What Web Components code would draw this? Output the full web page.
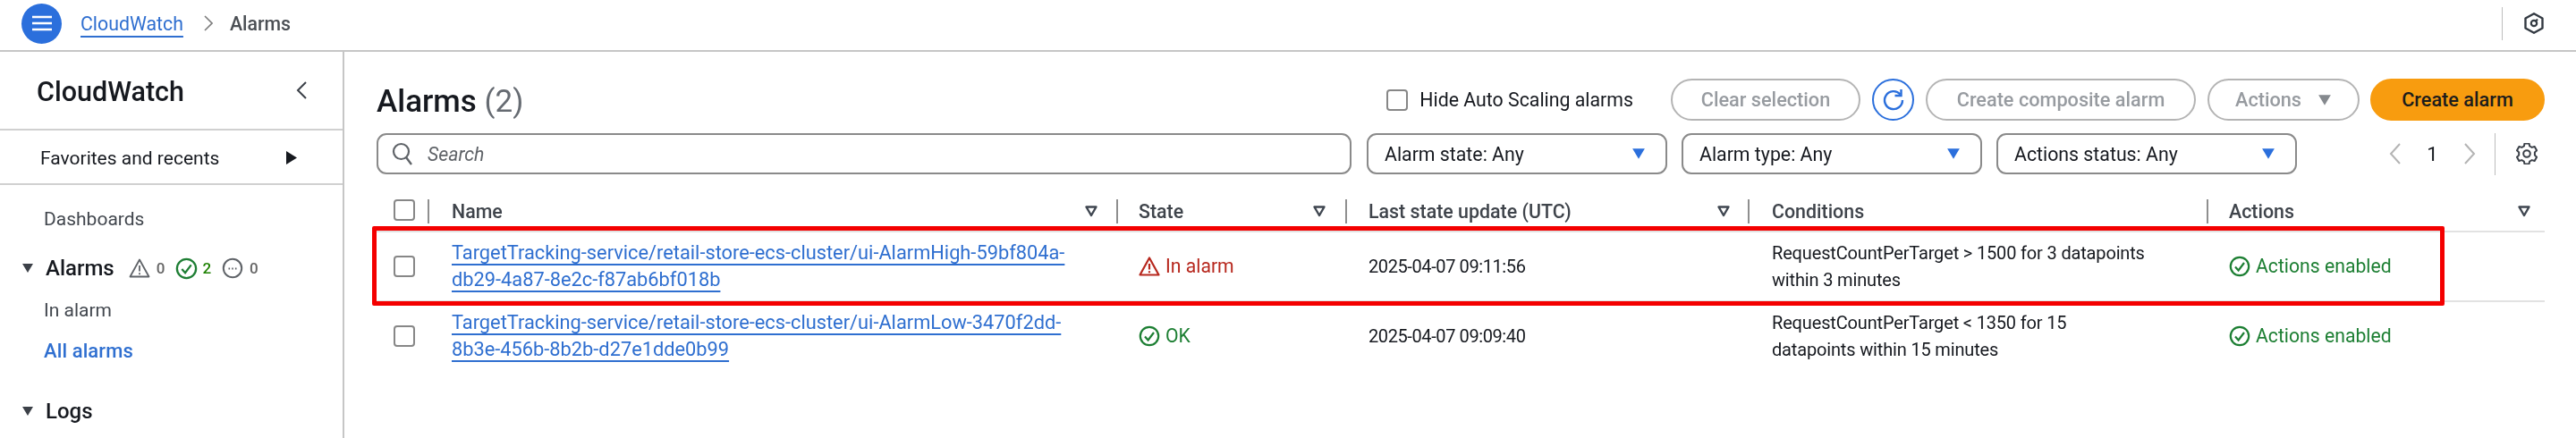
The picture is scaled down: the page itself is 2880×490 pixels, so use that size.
<!DOCTYPE html>
<html lang="en"><head><meta charset="utf-8"><title>CloudWatch Alarms</title>
<style>
html,body{margin:0;padding:0;background:#fff}
body{font-family:Roboto,"Liberation Sans",sans-serif;color:#16191f;width:2880px;height:490px;overflow:hidden}
</style></head><body>
<app-shell>
  <top-bar slot="top"></top-bar>
  <side-nav slot="side"></side-nav>
  <alarms-panel slot="main"></alarms-panel>
</app-shell>
<script>
function def(name, css, html){
  customElements.define(name, class extends HTMLElement{
    constructor(){super();const s=this.attachShadow({mode:'open'});
      s.innerHTML='<style>'+css+'</style>'+(typeof html==='function'?html(this):html);}
    connectedCallback(){ if(typeof html==='function'){this.shadowRoot.innerHTML='<style>'+css+'</style>'+html(this);} }
  });
}
const I={
 tri:(c,w=14,h=14)=>`<svg width="${w}" height="${h}" viewBox="0 0 14 14"><path d="M1 2h12L7 12z" fill="${c}"/></svg>`,
 filt:`<svg width="14" height="13" viewBox="0 0 14 13"><path d="M1.5 1.5h11L7 11z" fill="none" stroke="#3f4650" stroke-width="2.4" stroke-linejoin="round"/></svg>`,
 warn:(c,s=23,sw=2)=>`<svg width="${s}" height="${s}" viewBox="0 0 24 24"><path d="M12 2.5 22.5 21.5h-21z" fill="none" stroke="${c}" stroke-width="${sw}" stroke-linejoin="round"/><path d="M12 9v6.5M12 17.2v2" stroke="${c}" stroke-width="${sw}" fill="none"/></svg>`,
 ok:(c,s=24)=>`<svg width="${s}" height="${s}" viewBox="0 0 24 24"><circle cx="12" cy="12" r="10.2" fill="none" stroke="${c}" stroke-width="2.2"/><path d="M7 12.5l3.6 4L17 8" fill="none" stroke="${c}" stroke-width="2.2"/></svg>`,
 dots:(c,s=24)=>`<svg width="${s}" height="${s}" viewBox="0 0 24 24"><circle cx="12" cy="12" r="10.2" fill="none" stroke="${c}" stroke-width="2"/><path d="M7.5 12.5h1.6M11.2 12.5h1.6M14.9 12.5h1.6" stroke="${c}" stroke-width="2.2"/></svg>`
};
def('app-shell',`:host{display:grid;grid-template-columns:385px 1fr;grid-template-rows:58px 432px;width:2880px;height:490px;position:relative;overflow:hidden;filter:blur(.4px)}
 ::slotted([slot=top]){grid-column:1/3}`,
 `<slot name="top"></slot><slot name="side"></slot><slot name="main"></slot>`);

def('top-bar',`:host{display:flex;align-items:center;height:58px;box-sizing:border-box;border-bottom:2px solid #c6c6c6;padding:0 36px 4px 24px;font-size:21.3px}
 .menu{width:45px;height:45px;border-radius:50%;background:#2b6fdc;display:flex;align-items:center;justify-content:center;margin-right:21px}
 a{color:#2f6fd0;text-decoration:underline;text-underline-offset:6px;text-decoration-thickness:1.5px}
 .cur{color:#4b4f54;font-weight:500}
 .sep{margin:0 19px 0 23px;display:flex}
 .right{margin-left:auto;display:flex;align-items:center;height:37px;border-left:1px solid #bdbdbd;padding-left:24px}`,
 `<div class="menu"><svg width="22" height="18" viewBox="0 0 22 18"><path d="M0 2h22M0 9h22M0 16h22" stroke="#fff" stroke-width="2.6"/></svg></div>
 <a href="#">CloudWatch</a>
 <span class="sep"><svg width="10" height="18" viewBox="0 0 10 18"><path d="M1 1l8 8-8 8" fill="none" stroke="#7d7d7d" stroke-width="1.6"/></svg></span>
 <span class="cur">Alarms</span>
 <div class="right"><svg width="22" height="24" viewBox="0 0 22 24"><path d="M11 1.2 20.5 6.5v11L11 22.8 1.5 17.5v-11z" fill="none" stroke="#333a42" stroke-width="2.4" stroke-linejoin="round"/><circle cx="11" cy="12" r="3.2" fill="none" stroke="#333a42" stroke-width="2.2"/><path d="M12.5 10.5l2.5-3" stroke="#333a42" stroke-width="2"/></svg></div>`);

def('side-nav',`:host{display:block;border-right:2px solid #c6c6c6;box-sizing:border-box;height:432px;font-size:21px;overflow:hidden}
 .h{height:88px;box-sizing:border-box;border-bottom:2px solid #d0d0d0;display:flex;align-items:center;justify-content:space-between;padding:0 40px 0 41px}
 .h b{font-size:30.5px;font-weight:500;color:#16191f;position:relative;top:1px}
 .f{height:61px;box-sizing:border-box;border-bottom:2px solid #d0d0d0;display:flex;align-items:center;justify-content:space-between;padding:2px 51px 0 45px;color:#16191f}
 ul{list-style:none;margin:0;padding:0}
 .i{display:flex;align-items:center;height:30px;padding-left:49px;color:#42474e}
 .t{display:flex;align-items:center;height:30px;padding-left:24px;font-weight:500;font-size:24px;color:#16191f}
 .t>svg{margin-right:13px}
 .c{display:flex;align-items:center;font-size:17px;color:#666;font-weight:500;margin-left:16px;gap:7px}
 .c+.c{margin-left:12px}
 .g{color:#1d8102;gap:5px}`,
 `<div class="h"><b>CloudWatch</b><svg width="12" height="20" viewBox="0 0 12 20"><path d="M11 1 2 10l9 9" fill="none" stroke="#3b4048" stroke-width="2"/></svg></div>
 <div class="f"><span>Favorites and recents</span><svg width="12" height="15" viewBox="0 0 12 15"><path d="M0 0l12 7.5L0 15z" fill="#16191f"/></svg></div>
 <ul>
  <li class="i" style="margin-top:23px">Dashboards</li>
  <li class="t" style="margin-top:25px">${I.tri('#3c4148')}<span>Alarms</span>
    <span class="c">${I.warn('#5f6368',24,1.8)}0</span><span class="c g">${I.ok('#1e7e34',25)}2</span><span class="c">${I.dots('#5f6368',24)}0</span></li>
  <li class="i" style="margin-top:17px">In alarm</li>
  <li class="i" style="margin-top:15px;color:#2f6fd0;font-weight:500;letter-spacing:.1px;font-size:22px">All alarms</li>
  <li class="t" style="margin-top:38px">${I.tri('#3c4148')}<span>Logs</span></li>
 </ul>`);

def('aws-button',`:host{display:inline-flex;align-items:center;justify-content:center;height:47px;box-sizing:border-box;border:2.5px solid #b4b4b4;border-radius:24px;font-size:21.7px;font-weight:500;color:#979ba0;gap:18px}
 :host([primary]){background:#f89c0f;border-color:#f89c0f;color:#1c1c1c}`,`<slot></slot>`);

def('aws-check',`:host{display:inline-block;width:24px;height:24px;box-sizing:border-box;border:2.5px solid #878787;border-radius:4px;background:#fff;flex:none}`,``);

def('aws-select',`:host{display:flex;align-items:center;justify-content:space-between;width:336px;height:46px;box-sizing:border-box;border:2.5px solid #8a8a8a;border-radius:11px;padding:0 22px 0 18px;font-size:21.3px;color:#16191f}`,
 ()=>`<span><slot></slot></span>${I.tri('#2b6fdc',16,16)}`);

def('alarms-panel',`:host{display:block;padding:30px 35px 0 36px;box-sizing:border-box;height:432px;font-size:21.3px}
 .r1,.r2{display:flex;align-items:center}
 .r1{height:47px}
 .r2{height:46px;margin-top:14px}
 h1{margin:0;font-size:35px;font-weight:500;color:#16191f;position:relative;top:2px}
 h1 span{font-weight:400;color:#666b72}
 .hide{display:flex;align-items:center;gap:13px;margin-left:auto;color:#16191f}
 .btns{display:flex;align-items:center;gap:13px;margin-left:42px}
 .ref{width:47px;height:47px;border-radius:50%;border:2.5px solid #2b6fdc;box-sizing:border-box;display:flex;align-items:center;justify-content:center}
 .search{flex:1;display:flex;align-items:center;height:46px;box-sizing:border-box;border:2.5px solid #8a8a8a;border-radius:11px;padding-left:15px;margin-right:17px;font-style:italic;color:#5f6368;gap:16px}
 .sel{display:flex;gap:16px}
 .pg{display:flex;align-items:center;flex:none;width:277px;box-sizing:border-box;padding-left:103px;height:47px;font-size:22px;color:#16191f}
 .pg i{width:1px;height:47px;background:#bdbdbd;margin:0 23px 0 21px}
 .pg .n{width:71px;text-align:center;font-style:normal}`,
 `<div class="r1"><h1>Alarms <span>(2)</span></h1>
   <label class="hide"><aws-check></aws-check><span>Hide Auto Scaling alarms</span></label>
   <div class="btns"><aws-button style="width:212px">Clear selection</aws-button>
    <div class="ref"><svg width="26" height="26" viewBox="0 0 26 26"><path d="M20.5 6.5A10 10 0 1 0 23 13" fill="none" stroke="#2b6fdc" stroke-width="2.4"/><path d="M14.5 8h7V1" fill="none" stroke="#2b6fdc" stroke-width="2.4"/></svg></div>
    <aws-button style="width:302px">Create composite alarm</aws-button>
    <aws-button style="width:170px">Actions ${I.tri('#85898e',16,16)}</aws-button>
    <aws-button primary style="width:195px;margin-left:-1px">Create alarm</aws-button></div></div>
  <div class="r2"><div class="search"><svg width="24" height="26" viewBox="0 0 24 26"><circle cx="10.5" cy="10.5" r="8.5" fill="none" stroke="#5f6368" stroke-width="2.2"/><path d="M16 17l6 8" stroke="#5f6368" stroke-width="2.4"/></svg><span>Search</span></div>
   <div class="sel"><aws-select>Alarm state: Any</aws-select><aws-select>Alarm type: Any</aws-select><aws-select>Actions status: Any</aws-select></div>
   <div class="pg"><svg width="13" height="24" viewBox="0 0 13 24"><path d="M12 1 2 12l10 11" fill="none" stroke="#b4b4b4" stroke-width="2"/></svg><span class="n">1</span><svg width="13" height="24" viewBox="0 0 13 24"><path d="M1 1l10 11L1 23" fill="none" stroke="#b4b4b4" stroke-width="2"/></svg><i></i>
    <svg width="24" height="24" viewBox="0 0 24 24"><path d="M9.5 1.5h5l.7 3 2.5 1.4 3-.9 2.4 4.2-2.2 2.2v3.2l2.2 2.2-2.4 4.2-3-.9-2.5 1.4-.7 3h-5l-.7-3-2.5-1.4-3 .9L1 16.8l2.2-2.2v-3.2L1 9.2 3.4 5l3 .9 2.5-1.4z" transform="translate(0 -1)" fill="none" stroke="#3b4048" stroke-width="2" stroke-linejoin="round"/><circle cx="12" cy="12" r="3.8" fill="none" stroke="#3b4048" stroke-width="2"/></svg></div></div>
  <alarm-table></alarm-table>`);

const COLS='grid-template-columns:57px 770px 256px 450px 513px 378px;';
def('alarm-table',`:host{display:block;margin-top:28px;position:relative}
 .head{display:grid;${COLS}height:35px;font-weight:500;font-size:21.4px;color:#3f444b}
 .c{display:flex;align-items:center;height:27px;justify-content:space-between;box-sizing:border-box;border-left:2px solid #8f8f8f}
 .c0{padding-left:19px;height:24px}
 .c1{padding:0 21px 0 25px}.c2{padding:0 22px 0 23px}.c3{padding:0 20px 0 24px}.c4{padding:0 22px 0 25px}.c5{padding:0 16px 0 23px}
 .mark{position:absolute;left:-5px;top:30px;width:2317px;height:89px;box-sizing:border-box;border:5.5px solid #f40000;border-radius:2px;pointer-events:none}`,
 `<div class="head"><div class="c0"><aws-check></aws-check></div>
  <div class="c c1">Name${I.filt}</div><div class="c c2">State${I.filt}</div><div class="c c3">Last state update (UTC)${I.filt}</div><div class="c c4">Conditions</div><div class="c c5">Actions${I.filt}</div></div>
  <alarm-row state="alarm" time="2025-04-07 09:11:56"><span slot="name">TargetTracking-service/retail-store-ecs-cluster/ui-AlarmHigh-59bf804a-<br>db29-4a87-8e2c-f87ab6bf018b</span><span slot="cond">RequestCountPerTarget &gt; 1500 for 3 datapoints<br>within 3 minutes</span></alarm-row>
  <alarm-row state="ok" time="2025-04-07 09:09:40"><span slot="name">TargetTracking-service/retail-store-ecs-cluster/ui-AlarmLow-3470f2dd-<br>8b3e-456b-8b2b-d27e1dde0b99</span><span slot="cond">RequestCountPerTarget &lt; 1350 for 15<br>datapoints within 15 minutes</span></alarm-row>
  <div class="mark"></div>`);

def('alarm-row',`:host{display:grid;${COLS}height:78px;box-sizing:border-box;border-top:2px solid #e2e2e2;align-items:center;font-size:20px;line-height:30px;color:#16191f}
 .k{padding-left:19px;display:flex}
 a{color:#2f6fd0;font-size:21.8px;text-decoration:underline;text-underline-offset:5px;text-decoration-thickness:1.5px;padding-left:27px;display:block;white-space:nowrap}
 .s{padding-left:25px;display:flex;align-items:center;gap:6px;font-size:21.2px}
 .alarm{color:#b7281e}.ok{color:#1d7f33}
 .d{padding-left:26px;letter-spacing:-.4px}.q{padding-left:27px;white-space:nowrap;letter-spacing:-.16px}
 .e{padding-left:25px;display:flex;align-items:center;gap:6px;color:#1d7f33;font-size:21.2px}`,
 (h)=>{const a=h.getAttribute('state')==='alarm';return `<div class="k"><aws-check></aws-check></div>
  <a href="#"><slot name="name"></slot></a>
  <div class="s ${a?'alarm':'ok'}">${a?I.warn('#b7281e',24,2.2):I.ok('#1d7f33',24)}<span>${a?'In alarm':'OK'}</span></div>
  <div class="d">${h.getAttribute('time')}</div>
  <div class="q"><slot name="cond"></slot></div>
  <div class="e">${I.ok('#1d7f33',24)}<span>Actions enabled</span></div>`});
</script>
</body></html>
